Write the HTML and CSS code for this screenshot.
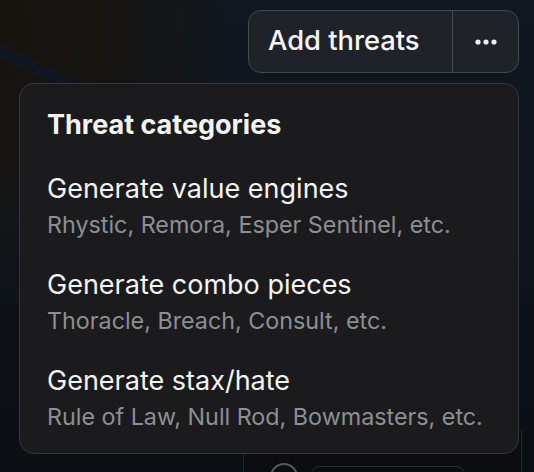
FILE: index.html
```html
<!DOCTYPE html>
<html lang="en">
<head>
<meta charset="utf-8">
<title>Add threats</title>
<link rel="stylesheet" href="styles.css">
</head>
<body>
  <div class="backdrop">
    <div class="streak"></div>
    <div class="under-panel">
      <span class="under-circle"></span>
      <span class="under-pill"></span>
    </div>
  </div>
  <div class="page">
    <div class="toolbar">
      <div class="btn-group">
        <button class="btn btn-main">Add threats</button>
        <button class="btn btn-more" aria-label="More">
          <svg width="22" height="6" viewBox="0 0 22 6"><circle cx="3" cy="3" r="2.6" fill="#f2f2f4"/><circle cx="11" cy="3" r="2.6" fill="#f2f2f4"/><circle cx="19" cy="3" r="2.6" fill="#f2f2f4"/></svg>
        </button>
      </div>
    </div>
    <div class="menu">
      <div class="menu-header">Threat categories</div>
      <div class="menu-item">
        <div class="item-title">Generate value engines</div>
        <div class="item-sub">Rhystic, Remora, Esper Sentinel, etc.</div>
      </div>
      <div class="menu-item">
        <div class="item-title">Generate combo pieces</div>
        <div class="item-sub">Thoracle, Breach, Consult, etc.</div>
      </div>
      <div class="menu-item">
        <div class="item-title">Generate stax/hate</div>
        <div class="item-sub">Rule of Law, Null Rod, Bowmasters, etc.</div>
      </div>
    </div>
  </div>
</body>
</html>
```

FILE: styles.css
```css
* { box-sizing: border-box; }
html, body {
  margin: 0;
  width: 534px;
  height: 472px;
  overflow: hidden;
}
body {
  position: relative;
  font-family: Inter, "Noto Sans", "Liberation Sans", sans-serif;
  background:
    radial-gradient(ellipse 230px 260px at 0px 30px, #17140f 0%, rgba(23,20,15,0.85) 45%, rgba(23,20,15,0) 100%),
    linear-gradient(180deg, #121820 0%, #10151c 45%, #0b0e13 100%);
  color: #f4f4f6;
}
.backdrop {
  position: absolute;
  inset: 0;
  overflow: hidden;
  pointer-events: none;
}
.streak {
  position: absolute;
  left: -20px;
  top: 62px;
  width: 110px;
  height: 10px;
  background: rgba(16,22,38,0.9);
  transform: rotate(26deg);
  filter: blur(2px);
}
.under-panel {
  position: absolute;
  left: 243px;
  top: 430px;
  width: 279px;
  height: 42px;
  border-left: 1px solid #23262c;
  border-right: 1px solid #23262c;
  background: #0b0d11;
  overflow: hidden;
}
.under-circle {
  position: absolute;
  left: 26px;
  top: 33px;
  width: 28px;
  height: 28px;
  border: 2px solid #55585e;
  border-radius: 50%;
}
.under-pill {
  position: absolute;
  left: 66px;
  top: 36px;
  width: 156px;
  height: 30px;
  border: 1px solid #2a2d33;
  border-radius: 10px;
}
.page {
  position: relative;
  display: flex;
  flex-direction: column;
  align-items: flex-end;
  padding: 10px 15px 0 19px;
}
.toolbar {
  display: flex;
  justify-content: flex-end;
}
.btn-group {
  display: flex;
  height: 63px;
  border: 1.5px solid #45484d;
  border-radius: 13px;
  background: rgba(34,38,43,0.85);
  overflow: hidden;
}
.btn {
  font: inherit;
  color: #f6f6f8;
  background: transparent;
  border: 0;
  padding: 0;
  display: flex;
  align-items: center;
  justify-content: center;
}
.btn-main {
  width: 204px;
  justify-content: flex-start;
  padding: 0 0 2px 19px;
  font-size: 27.3px;
  font-weight: 500;
  border-right: 1.5px solid #45484d;
}
.btn-more {
  width: 65px;
}
.menu {
  margin-top: 10px;
  width: 500px;
  background: #1b1b1d;
  border: 1.5px solid #35373b;
  border-radius: 15px;
  padding: 24px 27px 22px;
}
.menu-header {
  font-size: 27px;
  font-weight: 700;
  line-height: 34px;
  margin-bottom: 30px;
}
.menu-item + .menu-item {
  margin-top: 29px;
}
.item-title {
  font-size: 27px;
  line-height: 34px;
  font-weight: 400;
  margin-bottom: 5px;
}
.item-sub {
  font-size: 23.3px;
  line-height: 28px;
  color: #8e8e93;
}
```
